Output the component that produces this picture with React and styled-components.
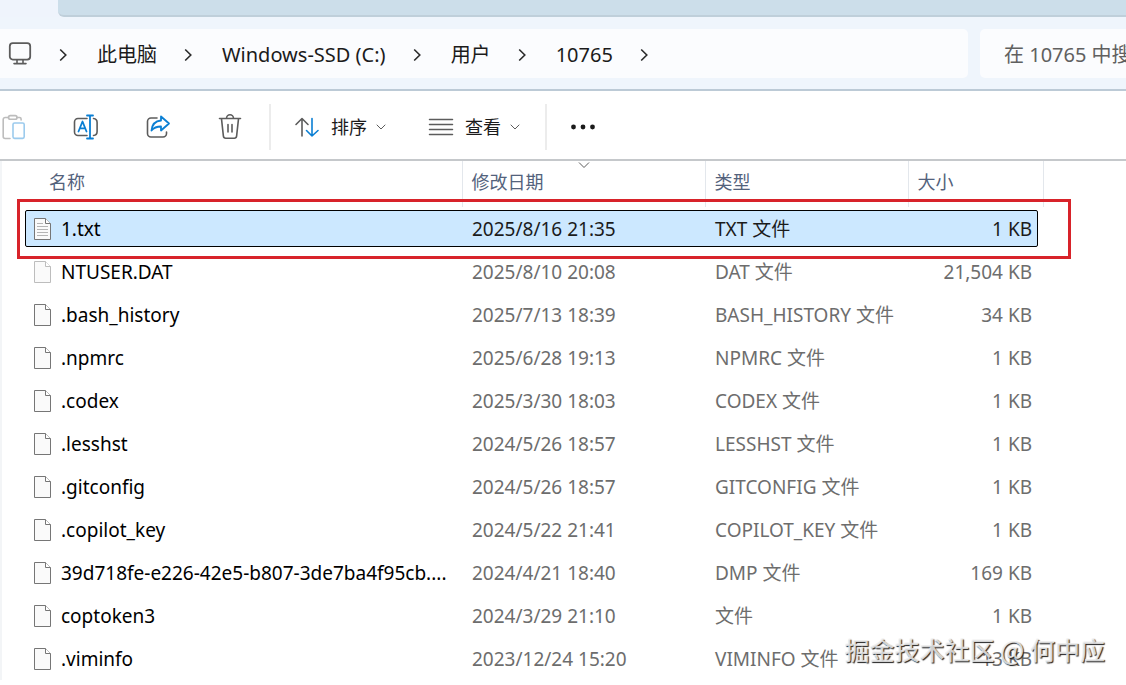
import styled, { createGlobalStyle, css } from 'styled-components';

const GlobalStyle=createGlobalStyle`
	*,*::before,*::after{
		box-sizing:border-box;
	}

	body{
		margin:0;
		background:#fff;
		color:#1b1b1b;
		font-family:'Noto Sans','Noto Sans CJK SC',sans-serif;
	}

	button,input{
		font:inherit;
		color:inherit;
		border:0;
		padding:0;
		background:none;
	}
`

const Window=styled.main`
	position:relative;
	height:100vh;
	overflow:hidden;
`

const TabStrip=styled.div`
	display:flex;
	height:17px;
	padding-left:58px;
	background:#eff4fc;
`

const TabTail=styled.div`
	flex:1;
	background:#ccdeea;
	border-bottom:2px solid #bfcfda;
	border-bottom-left-radius:6px;
`

const NavBar=styled.nav`
	display:flex;
	gap:12px;
	height:74px;
	padding:12px 0 11px;
	background:#eff5fc;
	border-bottom:2px solid #bccad6;
	font-size:20px;
`

const AddressBar=styled.div`
	flex:1;
	display:flex;
	align-items:center;
	min-width:0;
	padding-left:8px;
	background:#fbfcfe;
	border-radius:0 5px 5px 0;
	white-space:nowrap;

	svg{
		flex:none;
	}
`

const Crumb=styled.button`
	padding-top:2px;
	line-height:28px;
`

const CrumbArrow=styled.svg`
	margin:2px 30px 0 27px;
`

const Search=styled.input`
	width:146px;
	padding:2px 0 0 24px;
	background:#fbfcfe;
	border-radius:5px 0 0 5px;

	&::placeholder{
		color:#606060;
		opacity:1;
	}
`

const Toolbar=styled.div`
	display:flex;
	align-items:center;
	height:70px;
	margin-left:-22px;
	padding-top:4px;
	border-bottom:2px solid #c5c8cb;
	font-size:18px;
`

const ToolButton=styled.button`
	display:flex;
	align-items:center;
	justify-content:center;
	width:72px;
	height:48px;
	opacity:${p=>p.disabled ? 0.4 : 1};
`

const MenuButton=styled(ToolButton)`
	gap:11px;
	width:auto;
	padding:0 11px;
	line-height:26px;
`

const MenuGroup=styled.div`
	display:flex;
	gap:20px;
`

const Label=styled.span`
	margin-right:-2px;
`

const Divider=styled.span`
	width:2px;
	height:46px;
	margin:0 ${p=>p.$after}px 0 ${p=>p.$before}px;
	background:#ececec;
`

const Files=styled.table`
	width:100%;
	table-layout:fixed;
	border-collapse:collapse;
	border-left:2px solid #f3f5f7;
	font-size:19px;
`

const Heading=styled.th`
	position:relative;
	height:46px;
	padding:0 0 0 ${p=>p.$indent || 9}px;
	color:#53627c;
	font-size:18px;
	font-weight:400;
	text-align:left;
	vertical-align:top;
	border-right:${p=>p.$last ? '0' : '1px solid #e3e7ec'};

	button{
		height:42px;
		line-height:42px;
	}
`

const SortMark=styled.svg`
	position:absolute;
	top:0;
	left:50%;
	transform:translateX(-50%);
`

const Cell=styled.td`
	height:43px;
	padding:${p=>p.$right ? '0 11px 0 0' : '0 0 0 10px'};
	color:#6d6d6d;
	line-height:26px;
	text-align:${p=>p.$right ? 'right' : 'left'};
	white-space:nowrap;
`

const NameCell=styled(Cell)`
	padding-left:32px;
	color:#000;
`

const Name=styled.div`
	display:flex;
	align-items:center;
	gap:10px;
`

const highlighted=css`
	position:relative;
	z-index:0;

	${Cell}{
		color:#1b1b1b;
	}

	${NameCell}{
		position:relative;
		color:#000;
	}

	${NameCell}::before{
		content:'';
		position:absolute;
		z-index:-1;
		top:3px;
		bottom:3px;
		left:23px;
		width:1013px;
		background:#cce8ff;
		border:1px solid #000;
		border-radius:2px;
	}

	${NameCell}::after{
		content:'';
		position:absolute;
		top:-8px;
		bottom:-9px;
		left:15px;
		width:1054px;
		border:3px solid #d8232a;
	}
`

const Row=styled.tr`
	${p=>p.$selected && highlighted}
`

const Watermark=styled.div`
	position:absolute;
	right:21px;
	bottom:18px;
	color:rgba(240,240,240,0.85);
	font-family:'Noto Sans CJK SC',sans-serif;
	font-size:25px;
	font-weight:500;
	line-height:36px;
	text-shadow:1px 1px 1px #222;
	pointer-events:none;
`

const GREY='#5c5c5c';
const BLUE='#0a7fd4';

const crumbs=['此电脑','Windows-SSD (C:)','用户','10765'];

const files=[
	{ name:'1.txt', date:'2025/8/16 21:35', type:'TXT 文件', size:'1 KB', kind:'text', selected:true },
	{ name:'NTUSER.DAT', date:'2025/8/10 20:08', type:'DAT 文件', size:'21,504 KB', kind:'hidden' },
	{ name:'.bash_history', date:'2025/7/13 18:39', type:'BASH_HISTORY 文件', size:'34 KB' },
	{ name:'.npmrc', date:'2025/6/28 19:13', type:'NPMRC 文件', size:'1 KB' },
	{ name:'.codex', date:'2025/3/30 18:03', type:'CODEX 文件', size:'1 KB' },
	{ name:'.lesshst', date:'2024/5/26 18:57', type:'LESSHST 文件', size:'1 KB' },
	{ name:'.gitconfig', date:'2024/5/26 18:57', type:'GITCONFIG 文件', size:'1 KB' },
	{ name:'.copilot_key', date:'2024/5/22 21:41', type:'COPILOT_KEY 文件', size:'1 KB' },
	{ name:'39d718fe-e226-42e5-b807-3de7ba4f95cb....', date:'2024/4/21 18:40', type:'DMP 文件', size:'169 KB' },
	{ name:'coptoken3', date:'2024/3/29 21:10', type:'文件', size:'1 KB' },
	{ name:'.viminfo', date:'2023/12/24 15:20', type:'VIMINFO 文件', size:'13 KB' },
]

function Icon({children,width=26,height=26}){
	return(
		<svg width={width} height={height} viewBox={`0 0 ${width} ${height}`} fill="none" stroke={GREY} strokeWidth="1.6" strokeLinecap="round" strokeLinejoin="round" aria-hidden="true">
			{children}
		</svg>
	)
}

function PcIcon(){
	return(
		<Icon width={24} height={24}>
			<rect x="1.8" y="1.2" width="20.4" height="16.4" rx="3" strokeWidth="1.8" />
			<path d="M9 18v3.4M15 18v3.4M6 21.6h12" />
		</Icon>
	)
}

function PasteIcon(){
	return(
		<Icon>
			<path d="M7.5 3.5H4.2a2 2 0 0 0-2 2v17a2 2 0 0 0 2 2H9M16 3.5h2.5a1.6 1.6 0 0 1 1.6 1.6V6" />
			<rect x="7.5" y="1.6" width="8.5" height="3.6" rx="1.8" />
			<rect x="12" y="9" width="11.2" height="15.4" rx="1.6" stroke={BLUE} />
		</Icon>
	)
}

function RenameIcon(){
	return(
		<Icon>
			<path d="M14 4.5H5A3.5 3.5 0 0 0 1.5 8v10A3.5 3.5 0 0 0 5 21.5h9M20.5 4.5a4 4 0 0 1 3.6 4v9a4 4 0 0 1-3.6 4" />
			<path d="M5.5 17.5l4-10 4 10M6.9 14.3h5.2M14 1.5h6M14 24.5h6M17 1.5v23" stroke={BLUE} strokeWidth="1.8" />
		</Icon>
	)
}

function ShareIcon(){
	return(
		<Icon>
			<path d="M12 4H6a3.5 3.5 0 0 0-3.5 3.5v12A3.5 3.5 0 0 0 6 23h12a3.5 3.5 0 0 0 3.5-3.5V18" />
			<path d="M16 2.5l8 7-8 7v-4c-4 0-7 .9-9.5 4C7 10.8 10.3 7 16 6.5z" stroke={BLUE} strokeWidth="1.8" />
		</Icon>
	)
}

function TrashIcon(){
	return(
		<Icon>
			<path d="M2.5 4.5h21M9.5 4.3a3.5 3.5 0 0 1 7 0M4.5 4.8l1.9 17.4a2.3 2.3 0 0 0 2.3 2h8.6a2.3 2.3 0 0 0 2.3-2L21.5 4.8M11 10.5V18M15 10.5V18" />
		</Icon>
	)
}

function SortIcon(){
	return(
		<Icon>
			<path d="M8 22V4.5M2 10.5l6-6 6 6" />
			<path d="M18 4.5V22M12.5 16.5L18 22l6-5.5" stroke={BLUE} />
		</Icon>
	)
}

function ViewIcon(){
	return(
		<Icon>
			<path d="M1.5 5.5h23M1.5 10.5h23M1.5 15.5h23M1.5 20.5h23" strokeWidth="1.5" />
		</Icon>
	)
}

function DownIcon(){
	return(
		<Icon width={10} height={8}>
			<path d="M1 2l4 4 4-4" strokeWidth="1" />
		</Icon>
	)
}

function FileIcon({kind}){
	const stroke=kind==='hidden' ? '#bdbdbd' : '#767676';

	return(
		<svg width="17" height="22" viewBox="0 0 17 22" fill="#fafafa" stroke={stroke} aria-hidden="true">
			<path d="M.5.5h11l5 5v16H.5z" />
			<path d="M11.5.5v5h5" fill="#fff" />
			{kind==='text' && <path d="M3 5.5h6M3 8.5h11M3 11.5h11M3 14.5h11M3 17.5h11" stroke="#b5b5b5" />}
		</svg>
	)
}

function Arrow(){
	return(
		<CrumbArrow width="8" height="14" viewBox="0 0 8 14" fill="none" stroke="#2b2b2b" strokeWidth="1.6" aria-hidden="true">
			<path d="M1.2 1.5L6.8 7l-5.6 5.5" />
		</CrumbArrow>
	)
}

export default function App(){
	return(
		<Window>
			<GlobalStyle />

			<TabStrip>
				<TabTail />
			</TabStrip>

			<NavBar>
				<AddressBar>
					<PcIcon />
					{
						crumbs.map((x)=>{
							return [<Arrow key={x+'-arrow'} />,<Crumb key={x}>{x}</Crumb>]
						})
					}
					<Arrow />
				</AddressBar>
				<Search placeholder="在 10765 中搜索" aria-label="搜索" />
			</NavBar>

			<Toolbar>
				<ToolButton aria-label="粘贴" disabled><PasteIcon /></ToolButton>
				<ToolButton aria-label="重命名"><RenameIcon /></ToolButton>
				<ToolButton aria-label="共享"><ShareIcon /></ToolButton>
				<ToolButton aria-label="删除"><TrashIcon /></ToolButton>
				<Divider $before={3} $after={12} />
				<MenuGroup>
					<MenuButton>
						<SortIcon />
						<Label>排序</Label>
						<DownIcon />
					</MenuButton>
					<MenuButton>
						<ViewIcon />
						<Label>查看</Label>
						<DownIcon />
					</MenuButton>
				</MenuGroup>
				<Divider $before={14} $after={0} />
				<ToolButton aria-label="更多">
					<svg width="26" height="6" viewBox="0 0 26 6" fill="#1b1b1b" aria-hidden="true">
						<circle cx="3.5" cy="3" r="2.4" />
						<circle cx="13" cy="3" r="2.4" />
						<circle cx="22.5" cy="3" r="2.4" />
					</svg>
				</ToolButton>
			</Toolbar>

			<Files>
				<colgroup>
					<col width="461" />
					<col width="243" />
					<col width="203" />
					<col width="135" />
					<col />
				</colgroup>
				<thead>
					<tr>
						<Heading $indent={47}><button>名称</button></Heading>
						<Heading>
							<SortMark width="12" height="8" viewBox="0 0 12 8" fill="none" stroke="#5c5c5c">
								<path d="M1 1.5l5 5 5-5" />
							</SortMark>
							<button>修改日期</button>
						</Heading>
						<Heading><button>类型</button></Heading>
						<Heading><button>大小</button></Heading>
						<Heading as="td" $last />
					</tr>
				</thead>
				<tbody>
					{
						files.map((file)=>{
							return(
								<Row key={file.name} $selected={file.selected}>
									<NameCell>
										<Name>
											<FileIcon kind={file.kind} />
											{file.name}
										</Name>
									</NameCell>
									<Cell>{file.date}</Cell>
									<Cell>{file.type}</Cell>
									<Cell $right>{file.size}</Cell>
									<td />
								</Row>
							)
						})
					}
				</tbody>
			</Files>

			<Watermark>掘金技术社区 @ 何中应</Watermark>
		</Window>
	)
}
